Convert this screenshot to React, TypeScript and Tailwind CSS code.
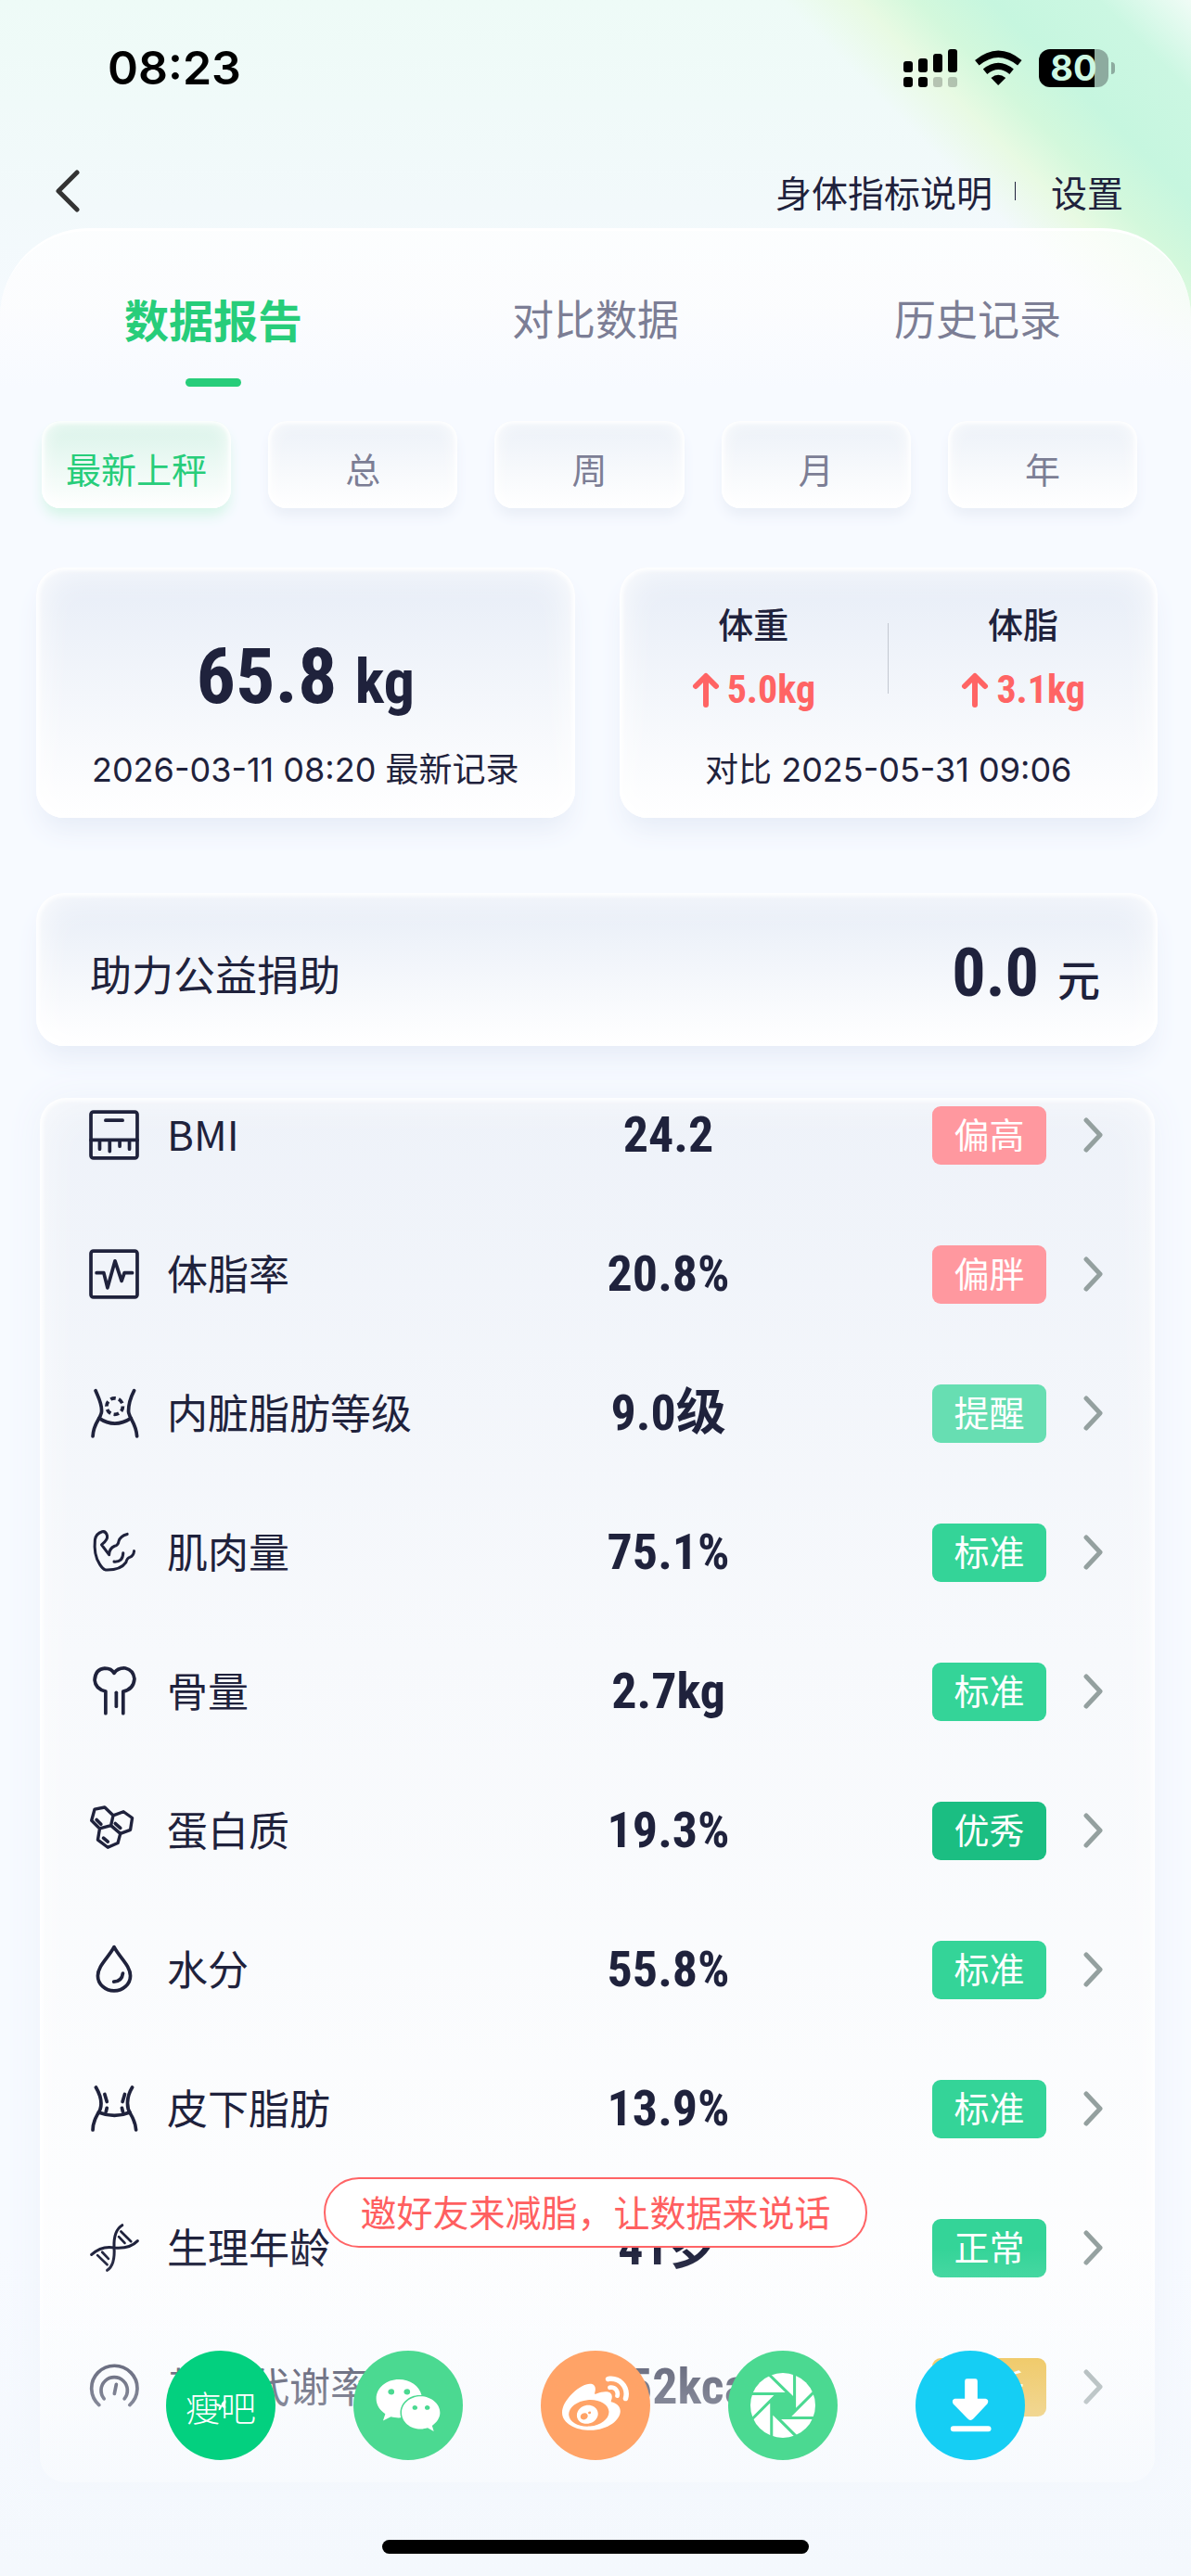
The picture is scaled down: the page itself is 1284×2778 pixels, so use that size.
import React, { useState } from 'react';
import clsx from 'clsx';
import { FaWeibo, FaWeixin } from 'react-icons/fa';

type Level = 'high' | 'notice' | 'standard' | 'excellent' | 'low';

interface Metric {
  id: string;
  label: string;
  value: string;
  status: string;
  level: Level;
  icon: React.ReactNode;
}

const levelStyles: Record<Level, string> = {
  high: 'bg-[#ff989f]',
  notice: 'bg-[#67deb2]',
  standard: 'bg-[#34d498]',
  excellent: 'bg-[#1bbe82]',
  low: 'bg-[#eeb422]',
};

const cjk = "font-['Noto_Sans_CJK_SC',sans-serif]";
const latin = "font-['Inter','Noto_Sans_CJK_SC',sans-serif]";
const digits = "font-['Roboto_Condensed','Noto_Sans_CJK_SC',sans-serif] font-bold";

const softCard =
  'rounded-[30px] bg-linear-to-b from-[#e7edf7] to-white shadow-[inset_0_0_5px_3px_#ffffff,inset_0_0_40px_#ffffff,0_18px_28px_-6px_#e6ecf7]';

const MetricIcon: React.FC<{ children: React.ReactNode }> = ({ children }) => (
  <svg
    viewBox="0 0 160 160"
    className="w-[54px] h-[54px] shrink-0"
    fill="none"
    stroke="currentColor"
    strokeWidth="11"
    strokeLinecap="round"
    strokeLinejoin="round"
    aria-hidden="true"
  >
    {children}
  </svg>
);

const metrics: Metric[] = [
  {
    id: 'bmi',
    label: 'BMI',
    value: '24.2',
    status: '偏高',
    level: 'high',
    icon: (
      <MetricIcon>
        <rect x="6" y="6" width="148" height="148" rx="8" />
        <path d="M53 33H107M6 96H154M34 96V125M66 96V132M98 96V116M129 96V125" />
      </MetricIcon>
    ),
  },
  {
    id: 'fat-rate',
    label: '体脂率',
    value: '20.8%',
    status: '偏胖',
    level: 'high',
    icon: (
      <MetricIcon>
        <rect x="6" y="6" width="148" height="148" rx="8" />
        <path d="M24 76H47L59 124L83 38L104 102L113 76H138" />
      </MetricIcon>
    ),
  },
  {
    id: 'visceral',
    label: '内脏脂肪等级',
    value: '9.0级',
    status: '提醒',
    level: 'notice',
    icon: (
      <MetricIcon>
        <path d="M21 8C30 30 42 50 40 75C38 98 14 110 12 154" />
        <path d="M144 8C130 35 126 55 126 74C128 98 150 110 153 154" />
        <path d="M32 96Q82 130 134 96" />
        <circle cx="82" cy="58" r="26" strokeDasharray="17 10" strokeLinecap="butt" />
      </MetricIcon>
    ),
  },
  {
    id: 'muscle',
    label: '肌肉量',
    value: '75.1%',
    status: '标准',
    level: 'standard',
    icon: (
      <MetricIcon>
        <path
          d="M122 22Q100 28 95 44Q93 58 82 60Q64 68 64 88L40 56Q60 40 58 28Q54 12 42 14Q22 20 19 40Q14 88 34 118Q44 134 52 136Q100 138 118 112Q122 98 130 96Q142 92 144 76"
          strokeWidth="9"
        />
        <path d="M109 82Q108 112 80 110" strokeWidth="9" />
      </MetricIcon>
    ),
  },
  {
    id: 'bone',
    label: '骨量',
    value: '2.7kg',
    status: '标准',
    level: 'standard',
    icon: (
      <MetricIcon>
        <path d="M53 150V80Q20 72 18 44Q20 8 50 6Q72 6 80 22Q92 4 116 6Q142 12 145 40Q142 74 109 80V150" />
        <path d="M87 84V128" />
      </MetricIcon>
    ),
  },
  {
    id: 'protein',
    label: '蛋白质',
    value: '19.3%',
    status: '优秀',
    level: 'excellent',
    icon: (
      <MetricIcon>
        <path
          d="M18 12L50 6L77 32L70 64L34 74L8 48ZM77 32L110 20L138 40L132 78L100 90L70 64M34 74L28 110L60 134L92 120L100 90"
          strokeWidth="10"
        />
        <path d="M24 46L38 60M84 58L100 72M46 104L60 116" />
      </MetricIcon>
    ),
  },
  {
    id: 'water',
    label: '水分',
    value: '55.8%',
    status: '标准',
    level: 'standard',
    icon: (
      <MetricIcon>
        <path d="M80 8C62 42 28 68 28 100A52 48 0 0 0 132 100C132 68 98 42 80 8Z" />
        <path d="M108 92Q105 118 79 119" />
      </MetricIcon>
    ),
  },
  {
    id: 'subcutaneous',
    label: '皮下脂肪',
    value: '13.9%',
    status: '标准',
    level: 'standard',
    icon: (
      <MetricIcon>
        <path d="M22 12C44 50 42 78 27 98Q12 125 12 148" />
        <path d="M138 12C118 45 120 78 132 96Q148 122 150 148" />
        <path d="M30 92Q82 112 130 92" />
        <path d="M50 34L57 58M57 78L54 90M114 34L107 58M105 78L108 90" />
      </MetricIcon>
    ),
  },
  {
    id: 'age',
    label: '生理年龄',
    value: '41岁',
    status: '正常',
    level: 'standard',
    icon: (
      <MetricIcon>
        <path d="M8 102Q40 72 82 80Q130 84 155 58" strokeWidth="9" />
        <path d="M106 8Q78 25 80 78Q84 135 58 152" strokeWidth="9" />
        <path d="M102 28L134 60M95 45L114 65M42 94L62 115M27 104L58 134" strokeWidth="8" />
      </MetricIcon>
    ),
  },
  {
    id: 'metabolism',
    label: '基础代谢率',
    value: '1552kcal',
    status: '偏低',
    level: 'low',
    icon: (
      <MetricIcon>
        <path d="M32 138A73 72 0 1 1 130 138" />
        <path d="M48 118A42 42 0 1 1 113 118" />
        <path d="M87 72L81 102" />
      </MetricIcon>
    ),
  },
];

const tabs = ['数据报告', '对比数据', '历史记录'];
const ranges = ['最新上秤', '总', '周', '月', '年'];

const StatusBar: React.FC = () => (
  <div className={`flex h-[146px] items-center justify-between pl-[116px] pr-[82px] text-black ${latin}`}>
    <time className="text-[50px] font-semibold leading-none">08:23</time>
    <div className="flex items-center">
      <svg viewBox="0 0 174 123" className="w-[58px] h-[41px]" aria-hidden="true">
        <rect x="0" y="39" width="30" height="36" rx="9" />
        <rect x="48" y="30" width="30" height="45" rx="9" />
        <rect x="96" y="15" width="30" height="60" rx="9" />
        <rect x="144" y="0" width="30" height="75" rx="9" />
        <rect x="0" y="90" width="30" height="33" rx="9" />
        <rect x="48" y="90" width="30" height="33" rx="9" />
        <rect x="96" y="90" width="30" height="33" rx="9" opacity=".22" />
        <rect x="144" y="90" width="30" height="33" rx="9" opacity=".22" />
      </svg>
      <svg viewBox="271 40 152 116" className="ml-[19px] w-[51px] h-[39px]" fill="none" stroke="#000" strokeWidth="21" aria-hidden="true">
        <path d="M278 81Q346 24 415 81" />
        <path d="M304 109Q346 74 389 109" />
        <path d="M346 153L323 129Q346 110 370 129Z" fill="#000" stroke="none" />
      </svg>
      <div className="ml-[18px] flex h-[41px] w-[75px] items-center justify-center rounded-[12px] bg-linear-to-r from-black from-80% to-[#8dab9f] to-80%">
        <span className="text-[38px] font-bold leading-none text-[#cdf8e2]">80</span>
      </div>
      <div className="ml-[3px] h-[13px] w-1 rounded-r-full bg-[#8dab9f]" />
    </div>
  </div>
);

const Header: React.FC = () => (
  <header className="flex h-[100px] items-center justify-between pt-5 pl-[60px] pr-[73px] text-[39px] leading-[52px] text-[#1f223c]">
    <button aria-label="返回">
      <svg viewBox="0 0 28 46" className="w-7 h-[46px]" fill="none" stroke="#333" strokeWidth="5" strokeLinecap="round" strokeLinejoin="round">
        <path d="M23 3L3 23L23 43" />
      </svg>
    </button>
    <nav className="flex items-center">
      <a href="#explain">身体指标说明</a>
      <span className="ml-6 mr-[38px] h-5 w-px bg-[#1f223c]" />
      <a href="#settings">设置</a>
    </nav>
  </header>
);

const Delta: React.FC<{ title: string; value: string }> = ({ title, value }) => (
  <div className="flex flex-1 flex-col items-center">
    <span className="text-[38px] font-medium leading-[52px]">{title}</span>
    <span className={`mt-4 flex items-center gap-2 text-[42px] leading-[60px] text-[#ff6464] ${digits}`}>
      <svg viewBox="0 0 30 38" className="w-[30px] h-[38px]" fill="none" stroke="currentColor" strokeWidth="6" strokeLinecap="round" strokeLinejoin="round" aria-hidden="true">
        <path d="M15 35V5M4 15L15 4L26 15" />
      </svg>
      {value}
    </span>
  </div>
);

const MetricRow: React.FC<{ metric: Metric }> = ({ metric }) => (
  <li>
    <a href={`#${metric.id}`} className="grid h-20 grid-cols-[3fr_2fr_2fr] items-center">
      <span className="flex items-center gap-[30px] whitespace-nowrap text-[44px] leading-none">
        {metric.icon}
        <span className="pb-1">{metric.label}</span>
      </span>
      <span className={`text-center text-[54px] leading-none ${digits}`}>{metric.value}</span>
      <span className="flex items-center justify-end">
        <span className={clsx('flex h-[63px] w-[123px] items-center justify-center rounded-[9px] pb-1 text-[38px] leading-none text-white', levelStyles[metric.level])}>
          {metric.status}
        </span>
        <svg viewBox="0 0 21 38" className="ml-10 w-[21px] h-[38px]" fill="none" stroke="#94a09f" strokeWidth="5" strokeLinecap="round" strokeLinejoin="round" aria-hidden="true">
          <path d="M3 3L18 19L3 35" />
        </svg>
      </span>
    </a>
  </li>
);

const shareButton = 'flex size-[118px] items-center justify-center rounded-full text-white';

const ShareBar: React.FC = () => (
  <div className="pointer-events-none absolute inset-x-0 bottom-0 flex flex-col items-center">
    <p className="rounded-full border-2 border-[#ff6466] bg-white px-[37px] pb-1 text-[39px] leading-[68px] text-[#ff5f60]">
      邀好友来减脂，让数据来说话
    </p>
    <div className="flex w-full flex-col items-center bg-linear-to-b from-[#f4f8fd]/0 to-[#f4f8fd] pt-[111px] pb-6">
      <div className="pointer-events-auto flex gap-[84px]">
        <button aria-label="瘦吧" className={`${shareButton} relative bg-[#03d07f] text-[38px] font-light`}>
          瘦吧
          <svg viewBox="0 0 46 46" className="absolute w-3 h-3" fill="currentColor" aria-hidden="true">
            <path d="M2 16Q16 14 24 24Q28 4 44 2Q46 12 40 22Q46 30 42 36Q32 34 27 28Q24 44 14 43Q12 36 18 28Q6 28 2 16Z" />
          </svg>
        </button>
        <button aria-label="微信" className={`${shareButton} bg-[#4bd991]`}>
          <FaWeixin className="size-[72px]" />
        </button>
        <button aria-label="微博" className={`${shareButton} bg-[#ffa367]`}>
          <FaWeibo className="size-[72px]" />
        </button>
        <button aria-label="朋友圈" className={`${shareButton} bg-[#4bd991]`}>
          <svg viewBox="146 122 206 206" className="size-[70px]" aria-hidden="true">
            <circle cx="249" cy="225" r="103" fill="#fff" />
            <path d="M232 188H266L286 206V244L265 265H233L213 245V207Z" fill="#4bd991" />
            <path
              d="M286 110V244M350 180L265 265M360 265H233M295 327L213 245M213 335V207M150 270L232 188M140 188H266M204 126L286 206"
              fill="none"
              stroke="#4bd991"
              strokeWidth="9"
            />
          </svg>
        </button>
        <button aria-label="下载" className={`${shareButton} bg-[#15cef4]`}>
          <svg viewBox="790 142 134 174" className="w-[45px] h-[58px]" fill="currentColor" aria-hidden="true">
            <path d="M845 143H872Q879 143 879 150V207H905Q918 210 911 224L866 272Q856 282 847 272L800 224Q794 210 806 207H838V150Q838 143 845 143Z" />
            <rect x="792" y="296" width="131" height="18" rx="9" />
          </svg>
        </button>
      </div>
      <div className="mt-[86px] h-[15px] w-[460px] rounded-full bg-black" />
    </div>
  </div>
);

const App: React.FC = () => {
  const [activeTab, setActiveTab] = useState(tabs[0]);
  const [activeRange, setActiveRange] = useState(ranges[0]);

  return (
    <div className={`relative min-h-screen overflow-hidden bg-linear-to-b from-[#eefbf7] from-0% via-[#f2f9fb] via-8% to-[#f6faff] to-14% text-[#1f223c] ${cjk}`}>
      {/* Corner glow */}
      <div className="absolute right-0 top-0 size-[450px] bg-[linear-gradient(225deg,#f0fcf6_0%,#cbf7e2_11%,#c6f6df_24%,#d3f8dc_33%,#e8fae3_40%,#f0fbf800_49%)]" />

      <div className="relative">
        <StatusBar />
        <Header />

        <main className="rounded-t-[96px] border-t-[3px] border-white bg-[linear-gradient(180deg,#ffffffc0_0px,#fdfdfecc_80px,#f7faff_170px)]">
          {/* Tabs */}
          <div className="flex px-6 pt-[61px]" role="tablist">
            {tabs.map((tab) => (
              <button
                key={tab}
                role="tab"
                aria-selected={tab === activeTab}
                onClick={() => setActiveTab(tab)}
                className="flex flex-1 flex-col items-center gap-8"
              >
                <span className={clsx('leading-[66px]', tab === activeTab ? 'text-[48px] font-bold text-[#27cd7a]' : 'text-[45px] text-[#7c7e95]')}>
                  {tab}
                </span>
                {tab === activeTab && <span className="h-[9px] w-[60px] rounded-full bg-[#27cd7a]" />}
              </button>
            ))}
          </div>

          {/* Ranges */}
          <div className="mt-[37px] flex gap-[40px] pl-[45px] pr-[58px]">
            {ranges.map((range) => (
              <button
                key={range}
                onClick={() => setActiveRange(range)}
                className={clsx(
                  'h-[94px] flex-1 whitespace-nowrap rounded-[20px] bg-linear-to-b pt-2 text-[38px] leading-none',
                  range === activeRange
                    ? 'from-[#d9f3e9] to-white text-[#27cd7a] shadow-[inset_0_0_4px_2px_#ffffff,inset_0_0_20px_#ffffff,0_10px_14px_-2px_#d5f5e8]'
                    : 'from-[#ecf1f8] to-white text-[#7c7e95] shadow-[inset_0_0_4px_2px_#ffffff,inset_0_0_20px_#ffffff,0_10px_14px_-2px_#e9eef7]'
                )}
              >
                {range}
              </button>
            ))}
          </div>

          {/* Summary */}
          <div className="mt-16 grid grid-cols-2 gap-12 pl-[39px] pr-9">
            <section className={`flex flex-col items-center pt-[68px] pb-[26px] ${softCard}`}>
              <p className={`text-[84px] leading-[100px] ${digits}`}>
                65.8 <span className="text-[66px] leading-none">kg</span>
              </p>
              <p className={`mt-6 text-[36px] leading-[52px] ${latin}`}>2026-03-11 08:20 最新记录</p>
            </section>
            <section className={`pt-[34px] pb-[26px] ${softCard}`}>
              <div className="flex items-center">
                <Delta title="体重" value="5.0kg" />
                <span className="h-[76px] w-px bg-[#c3c8d1]" />
                <Delta title="体脂" value="3.1kg" />
              </div>
              <p className={`mt-[30px] text-center text-[36px] leading-[52px] ${latin}`}>对比 2025-05-31 09:06</p>
            </section>
          </div>

          {/* Donation */}
          <section className={`ml-[39px] mr-9 mt-[81px] flex h-[165px] items-center justify-between pl-[58px] pr-[62px] pt-2 ${softCard}`}>
            <span className="text-[45px] leading-none">助力公益捐助</span>
            <span className="flex items-baseline gap-5">
              <span className={`text-[72px] leading-none ${digits}`}>0.0</span>
              <span className="text-[46px] font-medium leading-none">元</span>
            </span>
          </section>

          {/* Metrics */}
          <ul className="ml-[43px] mr-[39px] mt-14 mb-[100px] flex flex-col gap-[70px] rounded-[28px] bg-linear-to-b from-[#eef2f9] via-[#f7f9fc] via-40% to-white pl-[53px] pr-[56px] pb-[63px] shadow-[inset_0_0_5px_3px_#ffffff,inset_0_0_50px_#ffffffb0,0_0_40px_#edf2fa]">
            {metrics.map((metric) => (
              <MetricRow key={metric.id} metric={metric} />
            ))}
          </ul>
        </main>
      </div>

      <ShareBar />
    </div>
  );
};

export default App;
